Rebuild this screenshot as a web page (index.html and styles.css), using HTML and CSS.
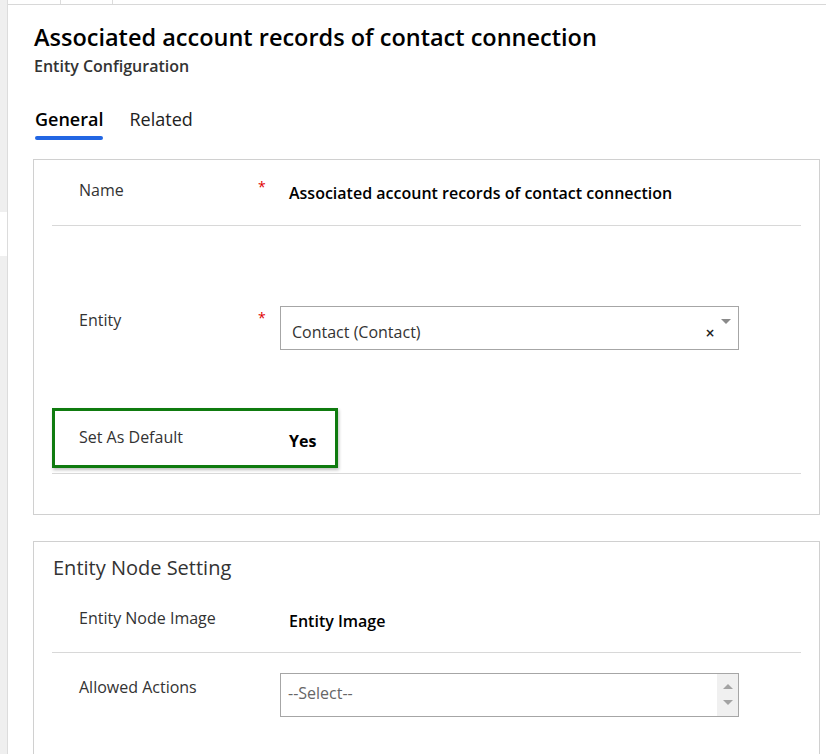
FILE: index.html
```html
<!DOCTYPE html>
<html>
<head>
<meta charset="utf-8">
<link rel="stylesheet" href="styles.css">
</head>
<body>
<div class="shell">
  <div class="rail">
    <div class="rail-a"></div>
    <div class="rail-b"></div>
    <div class="rail-c"></div>
  </div>
  <div class="main">
    <div class="topstrip">
      <div class="tcell tcell-1"></div>
      <div class="tcell tcell-2"></div>
    </div>
    <div class="header">
      <h1 class="title">Associated account records of contact connection</h1>
      <div class="subtitle">Entity Configuration</div>
    </div>
    <div class="tabs">
      <div class="tab active">General</div>
      <div class="tab">Related</div>
    </div>

    <div class="section s1">
      <div class="row row-name">
        <div class="label">Name</div>
        <div class="req">*</div>
        <div class="value semibold">Associated account records of contact connection</div>
      </div>
      <div class="row row-entity">
        <div class="label">Entity</div>
        <div class="req">*</div>
        <div class="lookup">
          <span class="lookup-text">Contact (Contact)</span>
          <span class="lookup-x">×</span>
          <span class="lookup-arrow"></span>
        </div>
      </div>
      <div class="row row-default">
        <div class="highlight">
          <div class="hl-label">Set As Default</div>
          <div class="hl-value">Yes</div>
        </div>
      </div>
    </div>

    <div class="section s2">
      <div class="section-title">Entity Node Setting</div>
      <div class="row row-image">
        <div class="label">Entity Node Image</div>
        <div class="req"></div>
        <div class="value semibold">Entity Image</div>
      </div>
      <div class="row row-actions">
        <div class="label">Allowed Actions</div>
        <div class="req"></div>
        <div class="listbox">
          <span class="listbox-text">--Select--</span>
          <span class="scroll">
            <span class="sc-up"></span>
            <span class="sc-down"></span>
          </span>
        </div>
      </div>
    </div>
  </div>
</div>
</body>
</html>
```

FILE: styles.css
```css
html, body {
  margin: 0;
  padding: 0;
  background: #fff;
  font-family: "Segoe UI", "Open Sans", "Noto Sans", sans-serif;
  color: #333;
  overflow: hidden;
}
.shell {
  display: flex;
  height: 754px;
}
.rail {
  width: 7px;
  border-right: 1px solid #dcdcdc;
  display: flex;
  flex-direction: column;
}
.rail-a { height: 212px; background: #efefef; }
.rail-b { height: 44px; background: #fff; }
.rail-c { flex: 1; background: #efefef; }
.main {
  flex: 1;
  min-width: 0;
}
.topstrip {
  height: 4px;
  border-bottom: 1px solid #d8d8d8;
  display: flex;
}
.tcell { border-right: 1px solid #dcdcdc; height: 4px; }
.tcell-1 { width: 52px; }
.tcell-2 { width: 51px; }
.header {
  padding: 17px 0 0 26px;
}
.title {
  margin: 0;
  font-size: 23.5px;
  font-weight: 600;
  line-height: 30px;
  color: #000;
}
.subtitle {
  font-size: 16px;
  font-weight: 600;
  line-height: 22px;
  color: #333;
  margin-top: 3px;
}
.tabs {
  display: flex;
  gap: 26px;
  padding: 29px 0 0 27px;
}
.tab {
  font-size: 18px;
  line-height: 26px;
  color: #222;
  padding-bottom: 8px;
}
.tab.active {
  font-weight: 600;
  color: #000;
  position: relative;
}
.tab.active::after {
  content: "";
  position: absolute;
  left: 0;
  right: 0;
  bottom: 0;
  height: 4px;
  border-radius: 2px;
  background: #2266e3;
}
.section {
  margin: 0 6px 0 25px;
  border: 1px solid #d0d0d0;
  padding: 0 18px;
}
.s1 {
  margin-top: 19px;
  padding-bottom: 40px;
}
.s2 {
  margin-top: 26px;
  padding-bottom: 60px;
}
.row {
  display: flex;
  align-items: flex-start;
  border-bottom: 1px solid #d8d8d8;
}
.label {
  width: 179px;
  padding-left: 27px;
  flex: none;
  font-size: 16px;
  line-height: 22px;
  color: #333;
}
.req {
  width: 22px;
  flex: none;
  color: #e00000;
  font-size: 14px;
  line-height: 14px;
}
.value {
  padding-left: 9px;
  font-size: 16px;
  line-height: 22px;
  color: #000;
}
.semibold { font-weight: 600; }
.row-name {
  height: 65px;
  padding-top: 0;
}
.row-name .label { margin-top: 19px; }
.row-name .req { margin-top: 20px; }
.row-name .value { margin-top: 22px; }
.row-entity {
  border-bottom: none;
  padding-top: 80px;
  height: 102px;
}
.row-entity .label { margin-top: 3px; }
.row-entity .req { margin-top: 5px; }
.lookup {
  width: 457px;
  height: 42px;
  border: 1px solid #a6a6a6;
  display: flex;
  align-items: center;
  position: relative;
}
.lookup-text {
  padding-left: 11px;
  font-size: 16px;
  color: #333;
  flex: 1;
  padding-top: 8px;
}
.lookup-x {
  color: #222;
  margin-right: 23px;
  padding-top: 10px;
  font-family: "DejaVu Sans", sans-serif;
  font-size: 12px;
  font-weight: bold;
}
.lookup-arrow {
  position: absolute;
  right: 7px;
  top: 12px;
  width: 0;
  height: 0;
  border-left: 5px solid transparent;
  border-right: 5px solid transparent;
  border-top: 5px solid #8a8a8a;
}
.row-default {
  height: 65px;
}
.highlight {
  width: 280px;
  height: 54px;
  border: 3px solid #0f7b0f;
  box-shadow: 1px 2px 3px rgba(0,0,0,0.25);
  display: flex;
  align-items: flex-start;
}
.hl-label {
  width: 210px;
  padding-left: 24px;
  flex: none;
  margin-top: 15px;
  font-size: 16px;
  line-height: 22px;
  color: #333;
}
.hl-value {
  margin-top: 19px;
  font-size: 16px;
  line-height: 22px;
  font-weight: 700;
  color: #000;
}
.section-title {
  font-size: 20px;
  line-height: 28px;
  color: #333;
  padding: 12px 0 0 1px;
}
.row-image {
  height: 70px;
}
.row-image .label { margin-top: 25px; }
.row-image .value { margin-top: 28px; }
.row-actions {
  border-bottom: none;
  padding-top: 20px;
}
.row-actions .label { margin-top: 3px; }
.listbox {
  width: 457px;
  height: 42px;
  border: 1px solid #a6a6a6;
  display: flex;
}
.listbox-text {
  flex: 1;
  padding: 8px 0 0 7px;
  font-size: 16px;
  line-height: 22px;
  color: #666;
}
.scroll {
  width: 21px;
  background: #f0f0f0;
  display: flex;
  flex-direction: column;
  align-items: center;
  justify-content: space-between;
  padding: 10px 0 11px;
}
.sc-up {
  width: 0; height: 0;
  border-left: 5px solid transparent;
  border-right: 5px solid transparent;
  border-bottom: 5px solid #a3a3a3;
}
.sc-down {
  width: 0; height: 0;
  border-left: 5px solid transparent;
  border-right: 5px solid transparent;
  border-top: 5px solid #a3a3a3;
}
```
